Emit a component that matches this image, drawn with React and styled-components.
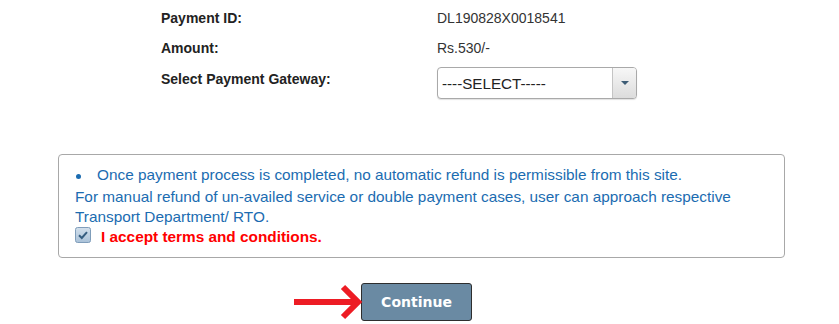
import React from "react";
import styled, { createGlobalStyle } from "styled-components";

const GlobalStyle = createGlobalStyle`
  html, body { margin: 0; padding: 0; background: #ffffff; }
  body { font-family: "Liberation Sans", Arial, sans-serif; }
  * { box-sizing: border-box; }
`;

const Page = styled.div`
  width: 839px;
  height: 324px;
  overflow: hidden;
  background: #fff;
`;

const DetailsGrid = styled.div`
  display: grid;
  grid-template-columns: 276px 200px;
  grid-template-rows: 30px 27px auto;
  margin-left: 161px;
  padding-top: 10px;
`;

const Label = styled.div`
  font-size: 14px;
  line-height: 16px;
  font-weight: bold;
  color: #222;
  margin-top: ${(p) => (p.$offset ? "4px" : "0")};
`;

const Value = styled.div`
  font-size: 14px;
  line-height: 16px;
  color: #333;
`;

const SelectBox = styled.div`
  display: flex;
  width: 200px;
  height: 32px;
  border: 1px solid #a9a9a9;
  border-radius: 4px;
  background: #fff;
  box-shadow: 0 1px 1px rgba(0, 0, 0, 0.12);
  overflow: hidden;
`;

const SelectText = styled.div`
  flex: 1;
  display: flex;
  align-items: center;
  padding-left: 4px;
  font-size: 15.2px;
  color: #222;
`;

const SelectButton = styled.div`
  width: 24px;
  display: flex;
  align-items: center;
  justify-content: center;
  border-left: 1px solid #c4c4c4;
  background: linear-gradient(#f7f7f7, #dcdcdc);
`;

const Caret = styled.span`
  width: 0;
  height: 0;
  border-left: 4px solid transparent;
  border-right: 4px solid transparent;
  border-top: 4px solid #3d5c75;
`;

const NoticeBox = styled.div`
  margin: 55px 0 0 58px;
  width: 727px;
  border: 1px solid #a8a8a8;
  border-radius: 4px;
  padding: 10px 16px 10px 16px;
  font-size: 15.35px;
  line-height: 20px;
  color: #1b6cb1;
`;

const BulletLine = styled.div`
  display: flex;
  align-items: center;
  margin-bottom: 2px;
  white-space: nowrap;
`;

const Bullet = styled.span`
  width: 5px;
  height: 5px;
  border-radius: 50%;
  background: #1b6cb1;
  margin: 2px 16px 0 1px;
  flex: none;
`;

const Paragraph = styled.div`
  white-space: nowrap;
`;

const AcceptRow = styled.label`
  display: flex;
  align-items: flex-start;
  gap: 10px;
  height: 20px;
`;

const CheckIcon = styled.svg`
  flex: none;
  display: block;
`;

const AcceptText = styled.span`
  font-weight: bold;
  color: #f00;
`;

const ActionRow = styled.div`
  display: flex;
  align-items: center;
  margin-top: 25px;
  padding-left: 293px;
`;

const Arrow = styled.svg`
  display: block;
  overflow: visible;
  position: relative;
  z-index: 1;
  flex: none;
`;

const ContinueButton = styled.button`
  width: 111px;
  height: 38px;
  border: 1px solid #2e2e2e;
  border-radius: 3px;
  background: #6a8aa3;
  color: #fff;
  font-family: "DejaVu Sans", Verdana, sans-serif;
  font-weight: bold;
  font-size: 14px;
  padding: 0;
  cursor: pointer;
`;

export default function App() {
  return (
    <Page>
      <GlobalStyle />
      <DetailsGrid>
        <Label>Payment ID:</Label>
        <Value>DL190828X0018541</Value>
        <Label>Amount:</Label>
        <Value>Rs.530/-</Value>
        <Label $offset>Select Payment Gateway:</Label>
        <SelectBox>
          <SelectText>----SELECT-----</SelectText>
          <SelectButton>
            <Caret />
          </SelectButton>
        </SelectBox>
      </DetailsGrid>

      <NoticeBox>
        <BulletLine>
          <Bullet />
          Once payment process is completed, no automatic refund is permissible from this site.
        </BulletLine>
        <Paragraph>
          For manual refund of un-availed service or double payment cases, user can approach respective
          <br />
          Transport Department/ RTO.
        </Paragraph>
        <AcceptRow>
          <CheckIcon width="16" height="16" viewBox="0 0 16 16">
            <defs>
              <linearGradient id="cbg" x1="0" y1="0" x2="0" y2="1">
                <stop offset="0" stopColor="#d3e0ec" />
                <stop offset="1" stopColor="#a9c1d8" />
              </linearGradient>
            </defs>
            <rect x="0.5" y="0.5" width="15" height="15" rx="2" fill="url(#cbg)" stroke="#7f9dba" />
            <path d="M4 8.2 L6.8 11 L12 5.2" fill="none" stroke="#355d80" strokeWidth="2" />
          </CheckIcon>
          <AcceptText>I accept terms and conditions.</AcceptText>
        </AcceptRow>
      </NoticeBox>

      <ActionRow>
        <Arrow width="68" height="38" viewBox="0 0 68 38">
          <path d="M1 19 H63" stroke="#ed1c24" strokeWidth="6" fill="none" />
          <polyline
            points="50,4 65,19 50,34"
            stroke="#ed1c24"
            strokeWidth="6"
            fill="none"
            strokeLinejoin="miter"
          />
        </Arrow>
        <ContinueButton>Continue</ContinueButton>
      </ActionRow>
    </Page>
  );
}
